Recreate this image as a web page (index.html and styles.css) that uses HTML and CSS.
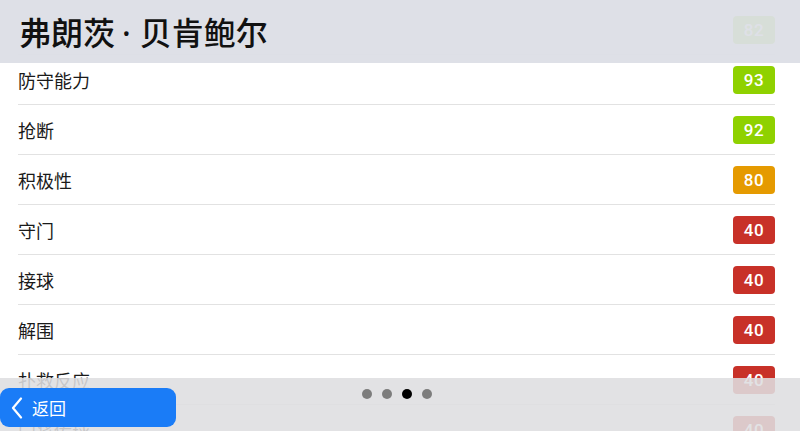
FILE: index.html
```html
<!DOCTYPE html>
<html lang="zh">
<head>
<meta charset="utf-8">
<link rel="stylesheet" href="styles.css">
</head>
<body>
<div class="screen">
  <div class="list">
    <div class="row"><span class="label"></span><span class="badge green">82</span></div>
    <div class="row"><span class="label">防守能力</span><span class="badge green">93</span></div>
    <div class="row"><span class="label">抢断</span><span class="badge green">92</span></div>
    <div class="row"><span class="label">积极性</span><span class="badge orange">80</span></div>
    <div class="row"><span class="label">守门</span><span class="badge red">40</span></div>
    <div class="row"><span class="label">接球</span><span class="badge red">40</span></div>
    <div class="row"><span class="label">解围</span><span class="badge red">40</span></div>
    <div class="row"><span class="label">扑救反应</span><span class="badge red">40</span></div>
    <div class="row"><span class="label">门将传球</span><span class="badge red">40</span></div>
  </div>
  <div class="header"><h1 class="title">弗朗茨<span class="sep">·</span>贝肯鲍尔</h1></div>
  <div class="footer">
    <div class="dots"><span class="dot"></span><span class="dot"></span><span class="dot active"></span><span class="dot"></span></div>
    <button class="back">
      <svg class="chev" width="12" height="22" viewBox="0 0 12 22"><polyline points="10,1.5 2,11 10,20.5" fill="none" stroke="#fff" stroke-width="2.2" stroke-linecap="round" stroke-linejoin="round"/></svg>
      <span>返回</span>
    </button>
  </div>
</div>
</body>
</html>
```
FILE: styles.css
```css
html, body { margin: 0; padding: 0; }
body { background: #fff; font-family: "Noto Sans CJK SC", "Noto Sans", sans-serif; }
.screen { position: relative; width: 800px; height: 431px; overflow: hidden; background: #fff; }
.list { padding-top: 5px; }
.row {
  box-sizing: border-box;
  height: 50px;
  margin: 0 25px 0 18px;
  border-bottom: 1px solid #e2e2e2;
  display: flex;
  align-items: center;
  justify-content: space-between;
}
.label { font-size: 18px; color: #1a1a1a; }
.badge {
  width: 42px; height: 28px; border-radius: 4px;
  display: flex; align-items: center; justify-content: center;
  color: #fff; font-family: "Roboto", "Open Sans", sans-serif; font-weight: 500; font-size: 17px;
  letter-spacing: 0.5px;
}
.green { background: #8fd100; }
.orange { background: #e59a00; }
.red { background: #c83128; }
.header {
  position: absolute; top: 0; left: 0; right: 0; height: 63px;
  background: rgba(220, 222, 230, 0.94);
  display: flex; align-items: center; padding-left: 19px;
}
.title { margin: 0; font-size: 32px; font-weight: 500; color: #111; line-height: 1; }
.sep { font-family: "Noto Sans", sans-serif; margin: 0 9px 0 7px; }
.footer {
  position: absolute; left: 0; right: 0; bottom: 0; height: 53px;
  background: rgba(222, 222, 224, 0.88);
}
.dots {
  position: absolute; top: 11px; left: 0; right: 0;
  display: flex; justify-content: center; gap: 10px; padding-right: 7px;
}
.dot { width: 10px; height: 10px; border-radius: 50%; background: #7d7d7d; }
.dot.active { background: #000; }
.back {
  position: absolute; left: 0; top: 10px; width: 176px; height: 39px;
  border: 0; border-radius: 9px; background: #1a7cf7; color: #fff;
  display: flex; align-items: center; gap: 9px; padding: 0 0 0 11px;
  font-family: "Noto Sans CJK SC", sans-serif; font-size: 17px;
}
.chev { display: block; }
```
